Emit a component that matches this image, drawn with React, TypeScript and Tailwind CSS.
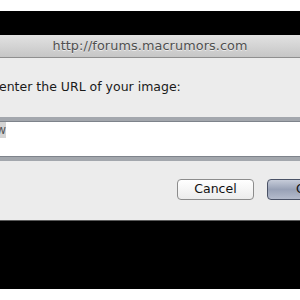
export default function App() {
  const font = { fontFamily: '"DejaVu Sans", "Lucida Grande", sans-serif' };
  return (
    <div className="w-[300px] h-[300px] bg-white flex flex-col overflow-hidden" style={font}>
      <div className="h-[11px] shrink-0 bg-white" />
      <div className="h-[24px] shrink-0 bg-black" />
      <div className="h-[23px] shrink-0 flex items-center justify-center bg-gradient-to-b from-[#e2e2e2] to-[#c6c6c6] border-b border-[#8f8f8f]">
        <span className="text-[12.8px] text-[#4f4f4f] tracking-[0.1px] [text-shadow:0_1px_0_rgba(255,255,255,0.6)]">
          http://forums.macrumors.com
        </span>
      </div>
      <div className="h-[162px] shrink-0 bg-[#ececec] flex flex-col">
        <div className="pt-[21px] -ml-[1px] text-[12.5px] leading-[16px] text-[#1a1a1a] whitespace-nowrap">
          enter the URL of your image:
        </div>
        <div className="mt-[22px] -mx-[6px] h-[44px] bg-white border-y-[4px] border-[#a3a7ad] shadow-[inset_0_1px_0_#7e838b,inset_0_-1px_0_#7e838b] flex items-start">
          <span className="ml-[6px] mt-[1px] h-[16px] w-[6px] bg-[#d4d4d4] overflow-hidden flex justify-end text-[12px] leading-[16px] text-[#555]">
            <span className="shrink-0">w</span>
          </span>
        </div>
        <div className="mt-[18px] flex overflow-hidden">
          <div className="ml-[177px] w-[77px] shrink-0 h-[21px] rounded-[4px] border border-[#8c8c8c] bg-gradient-to-b from-[#ffffff] to-[#ececec] flex items-center justify-center text-[12.5px] text-[#111]">
            Cancel
          </div>
          <div className="ml-[13px] w-[60px] h-[21px] shrink-0 rounded-[4px] border border-[#4a5266] bg-gradient-to-b from-[#c6ccd9] via-[#98a1b6] to-[#b4bbcc] flex items-center text-[12.5px] text-[#111]">
            <span className="ml-[28px]">OK</span>
          </div>
        </div>
      </div>
      <div className="h-[1px] shrink-0 bg-[#5a5a5a]" />
      <div className="h-[68px] shrink-0 bg-black" />
      <div className="flex-1 bg-white" />
    </div>
  );
}
